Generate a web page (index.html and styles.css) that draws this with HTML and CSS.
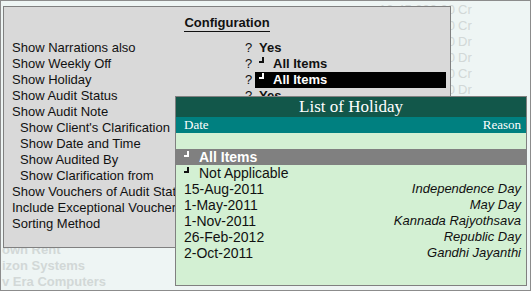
FILE: index.html
```html
<!DOCTYPE html>
<html>
<head>
  <link rel="stylesheet" href="styles.css">
</head>
<body>
  <div class="screen">
    <div class="ledger">
      <div class="lrow"><div class="lname"></div><div class="lamt">12,45,000.00</div><div class="ldc">Cr</div></div>
      <div class="lrow"><div class="lname"></div><div class="lamt">5,00,000.00</div><div class="ldc">Cr</div></div>
      <div class="lrow"><div class="lname"></div><div class="lamt">48,250.00</div><div class="ldc">Dr</div></div>
      <div class="lrow"><div class="lname"></div><div class="lamt">2,15,600.00</div><div class="ldc">Dr</div></div>
      <div class="lrow"><div class="lname"></div><div class="lamt">18,400.00</div><div class="ldc">Cr</div></div>
      <div class="lrow"><div class="lname"></div><div class="lamt">75,000.00</div><div class="ldc">Dr</div></div>
      <div class="lrow"></div>
      <div class="lrow"></div>
      <div class="lrow"></div>
      <div class="lrow"></div>
      <div class="lrow"></div>
      <div class="lrow"></div>
      <div class="lrow"></div>
      <div class="lrow"></div>
      <div class="lrow"></div>
      <div class="lrow"><div class="lname">own Rent</div></div>
      <div class="lrow"><div class="lname">izon Systems</div></div>
      <div class="lrow"><div class="lname">v Era Computers</div><div class="lmid">Purchase</div><div class="lamt">2-Nov-2011</div><div class="ldc">Dr</div></div>
    </div>

    <div class="config">
      <div class="config-title"><span>Configuration</span></div>
      <div class="row"><div class="label">Show Narrations also</div><div class="q">?</div><div class="val"><b>Yes</b></div></div>
      <div class="row"><div class="label">Show Weekly Off</div><div class="q">?</div><div class="val"><span class="tick"></span><b>All Items</b></div></div>
      <div class="row"><div class="label">Show Holiday</div><div class="q">?</div><div class="val active"><span class="tick"></span><b>All Items</b></div></div>
      <div class="row"><div class="label">Show Audit Status</div><div class="q">?</div><div class="val"><b>Yes</b></div></div>
      <div class="row"><div class="label">Show Audit Note</div></div>
      <div class="row"><div class="label sub">Show Client's Clarification</div></div>
      <div class="row"><div class="label sub">Show Date and Time</div></div>
      <div class="row"><div class="label sub">Show Audited By</div></div>
      <div class="row"><div class="label sub">Show Clarification from</div></div>
      <div class="row"><div class="label">Show Vouchers of Audit Status</div></div>
      <div class="row"><div class="label">Include Exceptional Vouchers</div></div>
      <div class="row"><div class="label">Sorting Method</div></div>
    </div>

    <div class="popup">
      <div class="popup-title">List of Holiday</div>
      <div class="popup-head"><span>Date</span><span>Reason</span></div>
      <div class="prow"></div>
      <div class="prow sel"><span><span class="tick"></span><b>All Items</b></span></div>
      <div class="prow"><span><span class="tick"></span>Not Applicable</span></div>
      <div class="prow"><span>15-Aug-2011</span><i>Independence Day</i></div>
      <div class="prow"><span>1-May-2011</span><i>May Day</i></div>
      <div class="prow"><span>1-Nov-2011</span><i>Kannada Rajyothsava</i></div>
      <div class="prow"><span>26-Feb-2012</span><i>Republic Day</i></div>
      <div class="prow"><span>2-Oct-2011</span><i>Gandhi Jayanthi</i></div>
    </div>
  </div>
</body>
</html>
```

FILE: styles.css
```css
body{margin:0;background:#fff;font-family:"Liberation Sans",Arial,sans-serif}
.screen{width:531px;height:291px;box-sizing:border-box;border:1px solid #8c8c8c;background:#eef5f4;position:relative;overflow:hidden}
.ledger{padding:1px 0 0 1px;color:#d2d8d7;font-size:13px;font-weight:bold}
.lrow{display:flex;height:16px;line-height:16px;white-space:nowrap}
.lname{flex:1}
.lmid{width:90px}
.lamt{width:110px;text-align:right;margin-right:3px;font-weight:normal}
.ldc{width:20px;margin-right:52px;font-weight:normal}
.config{position:absolute;left:2px;top:5px;width:448px;height:242px;box-sizing:border-box;border:1px solid #808080;background:#d9d9d9;padding-left:8px;color:#111;font-size:13px}
.config-title{text-align:center;margin:8px 0 8px -8px;font-weight:bold}
.config-title span{display:inline-block;line-height:16px;border-bottom:1px solid #111}
.row{display:flex;height:16px;line-height:16px;white-space:nowrap}
.label{width:233px;overflow:hidden}
.label.sub{padding-left:8px;width:225px}
.q{width:10px}
.val{width:187px;padding-left:4px}
.val.active{background:#000;color:#fff}
.tick{display:inline-block;width:3px;height:4px;border-right:2px solid currentColor;border-bottom:2px solid currentColor;vertical-align:top;margin-top:1px;margin-right:9px}
.popup{position:absolute;left:174px;top:95px;width:352px;height:190px;box-sizing:border-box;border:1px solid #808080;background:#d3f0d3;color:#111}
.popup-title{height:20px;line-height:20px;background:#12574a;color:#fff;text-align:center;font-family:"Liberation Serif","Times New Roman",serif;font-size:17px}
.popup-head{display:flex;justify-content:space-between;height:16px;line-height:16px;background:#008080;color:#fff;padding:0 5px 0 8px;font-family:"Liberation Serif","Times New Roman",serif;font-size:13px}
.prow{display:flex;justify-content:space-between;height:16px;line-height:16px;padding:0 5px 0 8px;font-size:14px;white-space:nowrap}
.prow i{font-size:13px}
.prow.sel{background:#808080;color:#fff}
.prow .tick{margin-top:2px;margin-right:10px}
```
